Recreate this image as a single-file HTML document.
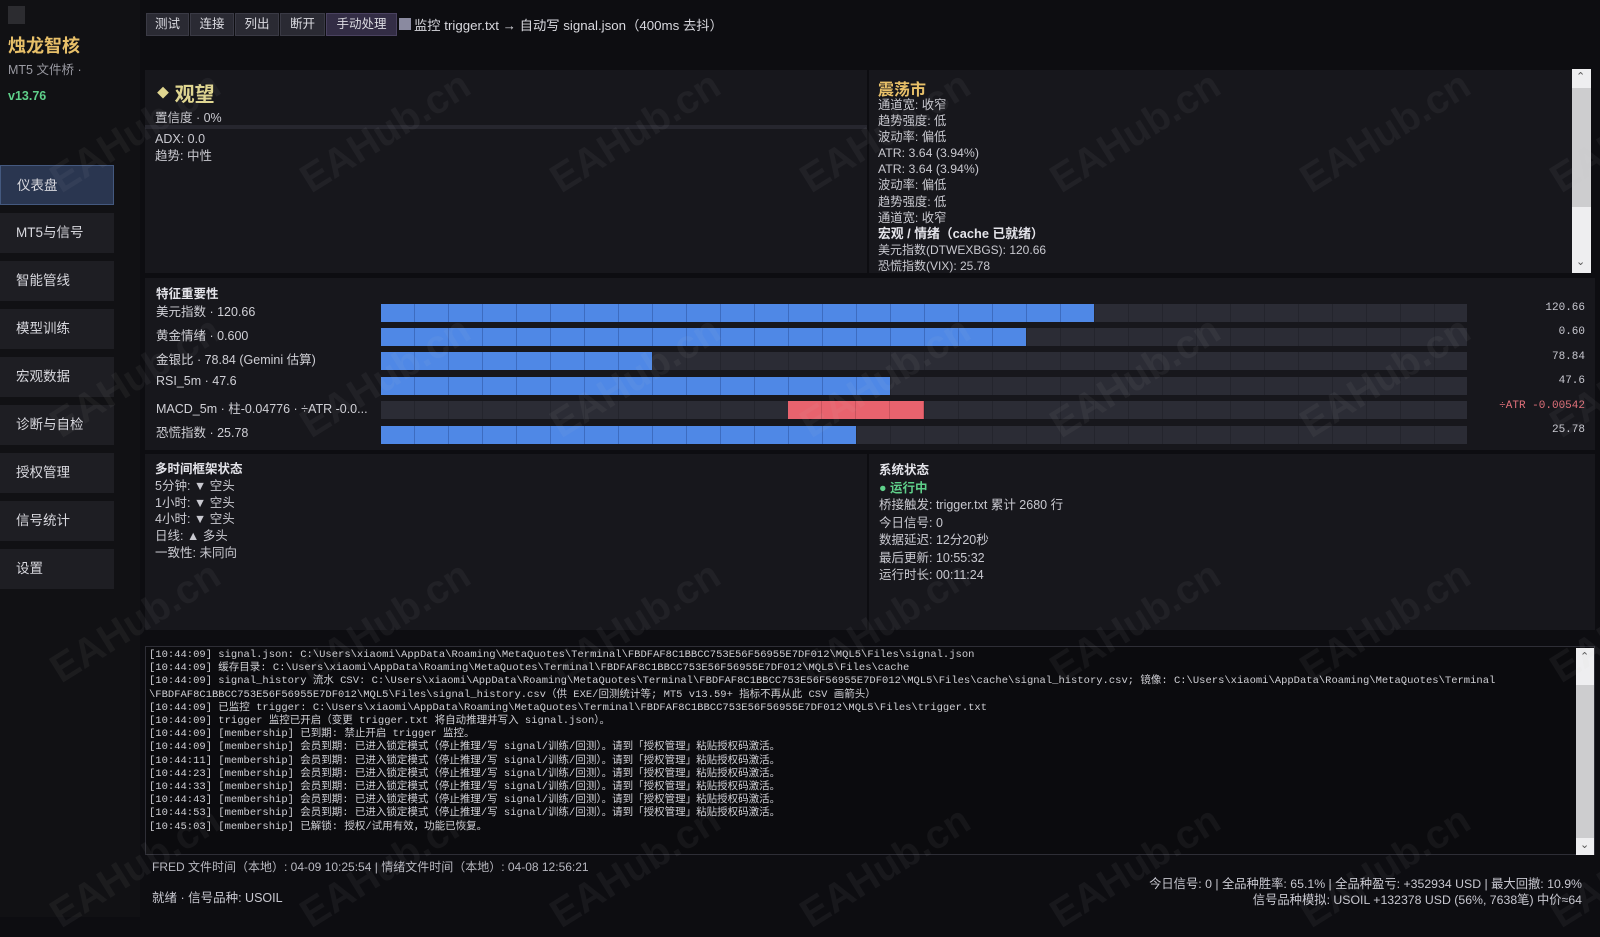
<!DOCTYPE html>
<html><head><meta charset="utf-8"><style>
*{margin:0;padding:0;box-sizing:border-box}
body{width:1600px;height:917px;overflow:hidden;background:#0d0d11;font-family:"Liberation Sans","Noto Sans CJK SC",sans-serif;color:#c9c9d0;font-size:12.5px;position:relative}
.abs{position:absolute}
.side{left:0;top:0;width:140px;height:917px;background:#111114}
.nav{position:absolute;left:0;width:114px;height:40px;background:#1e1e23;color:#d8d8de;font-size:13.5px;line-height:40px;padding-left:16px}
.nav.on{background:#2a3650;border:1px solid #44597f}
.btn{position:absolute;top:13px;height:23px;background:#2a2a33;border:1px solid #3a3a45;color:#dcdce2;font-size:12.5px;line-height:21px;text-align:center}
.panel{background:#17171c}
.t{position:absolute;white-space:nowrap}
.track{position:absolute;left:381px;width:1086px;height:18px;background:#2b2c35;background-image:repeating-linear-gradient(90deg,transparent 0 33px,#24252d 33px 34px)}
.fill{position:absolute;top:0;height:18px;background:#4f88e6;background-image:repeating-linear-gradient(90deg,transparent 0 33px,#3d6cc0 33px 34px)}
.lbl{position:absolute;left:156px;font-size:12.5px;color:#d0d0d6}
.val{position:absolute;right:15px;font-family:"Liberation Mono",monospace;font-size:11px;color:#c8c8d0}
.log{font-family:"Liberation Mono","Noto Sans CJK SC",monospace;font-size:10.5px;line-height:13.2px;color:#cfcfd4;white-space:pre}
.wm{position:absolute;color:rgba(200,200,210,0.06);font-size:40px;font-weight:bold;transform:rotate(-32deg);white-space:nowrap;font-family:"Liberation Sans",sans-serif}
</style></head><body>
<div class="abs side"></div>
<div class="abs" style="left:8px;top:6px;width:17px;height:18px;background:#2c2c30"></div>
<div class="t" style="left:8px;top:32px;font-size:18px;font-weight:bold;color:#e8c069">烛龙智核</div>
<div class="t" style="left:8px;top:59px;font-size:12.5px;color:#9a9aa2">MT5 文件桥 ·</div>
<div class="t" style="left:8px;top:89px;font-size:12.5px;font-weight:bold;color:#5fd08a">v13.76</div>
<div class="nav on" style="top:165px">仪表盘</div>
<div class="nav" style="top:213px">MT5与信号</div>
<div class="nav" style="top:261px">智能管线</div>
<div class="nav" style="top:309px">模型训练</div>
<div class="nav" style="top:357px">宏观数据</div>
<div class="nav" style="top:405px">诊断与自检</div>
<div class="nav" style="top:453px">授权管理</div>
<div class="nav" style="top:501px">信号统计</div>
<div class="nav" style="top:549px">设置</div>

<div class="btn" style="left:146px;width:43px">测试</div>
<div class="btn" style="left:190px;width:44px">连接</div>
<div class="btn" style="left:235px;width:44px">列出</div>
<div class="btn" style="left:280px;width:45px">断开</div>
<div class="btn" style="left:326px;width:71px;background:#332d45;border-color:#4a4260">手动处理</div>
<div class="abs" style="left:399px;top:18px;width:12px;height:12px;background:#8a8aa0"></div>
<div class="t" style="left:414px;top:15px;font-size:13.3px;color:#d8d8de">监控 trigger.txt → 自动写 signal.json（400ms 去抖）</div>

<div class="abs panel" style="left:145px;top:70px;width:722px;height:203px"></div>
<div class="abs panel" style="left:869px;top:70px;width:703px;height:203px"></div>
<div class="t" style="left:157px;top:78px;font-size:20px;font-weight:bold;color:#e0d690"><span style="font-size:12px;vertical-align:4px">◆</span> 观望</div>
<div class="t" style="left:155px;top:107px;font-size:12.5px">置信度 · 0%</div>
<div class="abs" style="left:145px;top:125px;width:722px;height:4px;background:#26262e"></div>
<div class="t" style="left:155px;top:131px;font-size:12.5px;line-height:16.5px">ADX: 0.0<br>趋势: 中性</div>
<div class="t" style="left:878px;top:76px;font-size:16px;font-weight:bold;color:#e8c069">震荡市</div>
<div class="t" style="left:878px;top:97px;font-size:12.3px;line-height:16.1px">通道宽: 收窄<br>趋势强度: 低<br>波动率: 偏低<br>ATR: 3.64 (3.94%)<br>ATR: 3.64 (3.94%)<br>波动率: 偏低<br>趋势强度: 低<br>通道宽: 收窄<br><b style="color:#e4e4ea;font-size:12.8px">宏观 / 情绪（cache 已就绪）</b><br><span style="font-size:12px">美元指数(DTWEXBGS): 120.66<br>恐慌指数(VIX): 25.78</span></div>
<div class="abs" style="left:1572px;top:69px;width:19px;height:204px;background:#eeeef0"></div>
<div class="abs" style="left:1572px;top:88px;width:19px;height:119px;background:#cdcdcf"></div>
<div class="t" style="left:1576px;top:70px;font-size:11px;color:#555">⌃</div>
<div class="t" style="left:1576px;top:255px;font-size:11px;color:#555">⌄</div>

<div class="abs panel" style="left:145px;top:278px;width:1450px;height:172px"></div>
<div class="t" style="left:156px;top:283px;font-size:12.5px;font-weight:bold;color:#e4e4ea">特征重要性</div>
<div class="lbl" style="top:301px">美元指数 · 120.66</div>
<div class="lbl" style="top:325px">黄金情绪 · 0.600</div>
<div class="lbl" style="top:349px">金银比 · 78.84 (Gemini 估算)</div>
<div class="lbl" style="top:374px">RSI_5m · 47.6</div>
<div class="lbl" style="top:398px">MACD_5m · 柱-0.04776 · ÷ATR -0.0...</div>
<div class="lbl" style="top:422px">恐慌指数 · 25.78</div>
<div class="track" style="top:304px"><div class="fill" style="left:0;width:713px"></div></div>
<div class="track" style="top:328px"><div class="fill" style="left:0;width:645px"></div></div>
<div class="track" style="top:352px"><div class="fill" style="left:0;width:271px"></div></div>
<div class="track" style="top:377px"><div class="fill" style="left:0;width:509px"></div></div>
<div class="track" style="top:401px"><div class="fill" style="left:407px;width:136px;background-color:#e8636e;background-image:repeating-linear-gradient(90deg,transparent 0 33px,#c9545e 33px 34px)"></div></div>
<div class="track" style="top:426px"><div class="fill" style="left:0;width:475px"></div></div>
<div class="val" style="top:302px">120.66</div>
<div class="val" style="top:326px">0.60</div>
<div class="val" style="top:351px">78.84</div>
<div class="val" style="top:375px">47.6</div>
<div class="val" style="top:400px;color:#e0707a">÷ATR -0.00542</div>
<div class="val" style="top:424px">25.78</div>

<div class="abs panel" style="left:145px;top:454px;width:722px;height:176px"></div>
<div class="abs panel" style="left:869px;top:454px;width:726px;height:176px"></div>
<div class="t" style="left:155px;top:461px;font-size:12.5px;line-height:16.8px"><b style="color:#e4e4ea">多时间框架状态</b><br>5分钟: ▼ 空头<br>1小时: ▼ 空头<br>4小时: ▼ 空头<br>日线: ▲ 多头<br>一致性: 未同向</div>
<div class="t" style="left:879px;top:462px;font-size:12.5px;line-height:17.5px"><b style="color:#e4e4ea">系统状态</b><br><b style="color:#5fd08a">● 运行中</b><br>桥接触发: trigger.txt 累计 2680 行<br>今日信号: 0<br>数据延迟: 12分20秒<br>最后更新: 10:55:32<br>运行时长: 00:11:24</div>

<div class="abs" style="left:145px;top:646px;width:1450px;height:209px;background:#0b0b0e;border:1px solid #2e2e36"></div>
<div class="abs log" style="left:149px;top:649px">[10:44:09] signal.json: C:\Users\xiaomi\AppData\Roaming\MetaQuotes\Terminal\FBDFAF8C1BBCC753E56F56955E7DF012\MQL5\Files\signal.json
[10:44:09] 缓存目录: C:\Users\xiaomi\AppData\Roaming\MetaQuotes\Terminal\FBDFAF8C1BBCC753E56F56955E7DF012\MQL5\Files\cache
[10:44:09] signal_history 流水 CSV: C:\Users\xiaomi\AppData\Roaming\MetaQuotes\Terminal\FBDFAF8C1BBCC753E56F56955E7DF012\MQL5\Files\cache\signal_history.csv; 镜像: C:\Users\xiaomi\AppData\Roaming\MetaQuotes\Terminal
\FBDFAF8C1BBCC753E56F56955E7DF012\MQL5\Files\signal_history.csv（供 EXE/回测统计等; MT5 v13.59+ 指标不再从此 CSV 画箭头）
[10:44:09] 已监控 trigger: C:\Users\xiaomi\AppData\Roaming\MetaQuotes\Terminal\FBDFAF8C1BBCC753E56F56955E7DF012\MQL5\Files\trigger.txt
[10:44:09] trigger 监控已开启（变更 trigger.txt 将自动推理并写入 signal.json）。
[10:44:09] [membership] 已到期: 禁止开启 trigger 监控。
[10:44:09] [membership] 会员到期: 已进入锁定模式（停止推理/写 signal/训练/回测）。请到「授权管理」粘贴授权码激活。
[10:44:11] [membership] 会员到期: 已进入锁定模式（停止推理/写 signal/训练/回测）。请到「授权管理」粘贴授权码激活。
[10:44:23] [membership] 会员到期: 已进入锁定模式（停止推理/写 signal/训练/回测）。请到「授权管理」粘贴授权码激活。
[10:44:33] [membership] 会员到期: 已进入锁定模式（停止推理/写 signal/训练/回测）。请到「授权管理」粘贴授权码激活。
[10:44:43] [membership] 会员到期: 已进入锁定模式（停止推理/写 signal/训练/回测）。请到「授权管理」粘贴授权码激活。
[10:44:53] [membership] 会员到期: 已进入锁定模式（停止推理/写 signal/训练/回测）。请到「授权管理」粘贴授权码激活。
[10:45:03] [membership] 已解锁: 授权/试用有效，功能已恢复。</div>
<div class="abs" style="left:1576px;top:648px;width:18px;height:207px;background:#eeeef0"></div>
<div class="abs" style="left:1576px;top:685px;width:18px;height:153px;background:#cdcdcf"></div>
<div class="t" style="left:1580px;top:650px;font-size:11px;color:#555">⌃</div>
<div class="t" style="left:1580px;top:838px;font-size:11px;color:#555">⌄</div>

<div class="t" style="left:152px;top:858px;font-size:12px;color:#b8b8c0">FRED 文件时间（本地）: 04-09 10:25:54 | 情绪文件时间（本地）: 04-08 12:56:21</div>
<div class="t" style="left:152px;top:887px;font-size:12.5px;color:#c8c8d0">就绪 · 信号品种: USOIL</div>
<div class="t" style="right:18px;top:876px;font-size:12.3px;line-height:16px;text-align:right;color:#c8c8d0">今日信号: 0 | 全品种胜率: 65.1% | 全品种盈亏: +352934 USD | 最大回撤: 10.9%<br>信号品种模拟: USOIL +132378 USD (56%, 7638笔) 中价≈64</div>

<div class="wm" style="left:40px;top:110px">EAHub.cn</div><div class="wm" style="left:290px;top:110px">EAHub.cn</div><div class="wm" style="left:540px;top:110px">EAHub.cn</div><div class="wm" style="left:790px;top:110px">EAHub.cn</div><div class="wm" style="left:1040px;top:110px">EAHub.cn</div><div class="wm" style="left:1290px;top:110px">EAHub.cn</div><div class="wm" style="left:1540px;top:110px">EAHub.cn</div>
<div class="wm" style="left:40px;top:355px">EAHub.cn</div><div class="wm" style="left:290px;top:355px">EAHub.cn</div><div class="wm" style="left:540px;top:355px">EAHub.cn</div><div class="wm" style="left:790px;top:355px">EAHub.cn</div><div class="wm" style="left:1040px;top:355px">EAHub.cn</div><div class="wm" style="left:1290px;top:355px">EAHub.cn</div><div class="wm" style="left:1540px;top:355px">EAHub.cn</div>
<div class="wm" style="left:40px;top:600px">EAHub.cn</div><div class="wm" style="left:290px;top:600px">EAHub.cn</div><div class="wm" style="left:540px;top:600px">EAHub.cn</div><div class="wm" style="left:790px;top:600px">EAHub.cn</div><div class="wm" style="left:1040px;top:600px">EAHub.cn</div><div class="wm" style="left:1290px;top:600px">EAHub.cn</div><div class="wm" style="left:1540px;top:600px">EAHub.cn</div>
<div class="wm" style="left:40px;top:845px">EAHub.cn</div><div class="wm" style="left:290px;top:845px">EAHub.cn</div><div class="wm" style="left:540px;top:845px">EAHub.cn</div><div class="wm" style="left:790px;top:845px">EAHub.cn</div><div class="wm" style="left:1040px;top:845px">EAHub.cn</div><div class="wm" style="left:1290px;top:845px">EAHub.cn</div><div class="wm" style="left:1540px;top:845px">EAHub.cn</div>
</body></html>
